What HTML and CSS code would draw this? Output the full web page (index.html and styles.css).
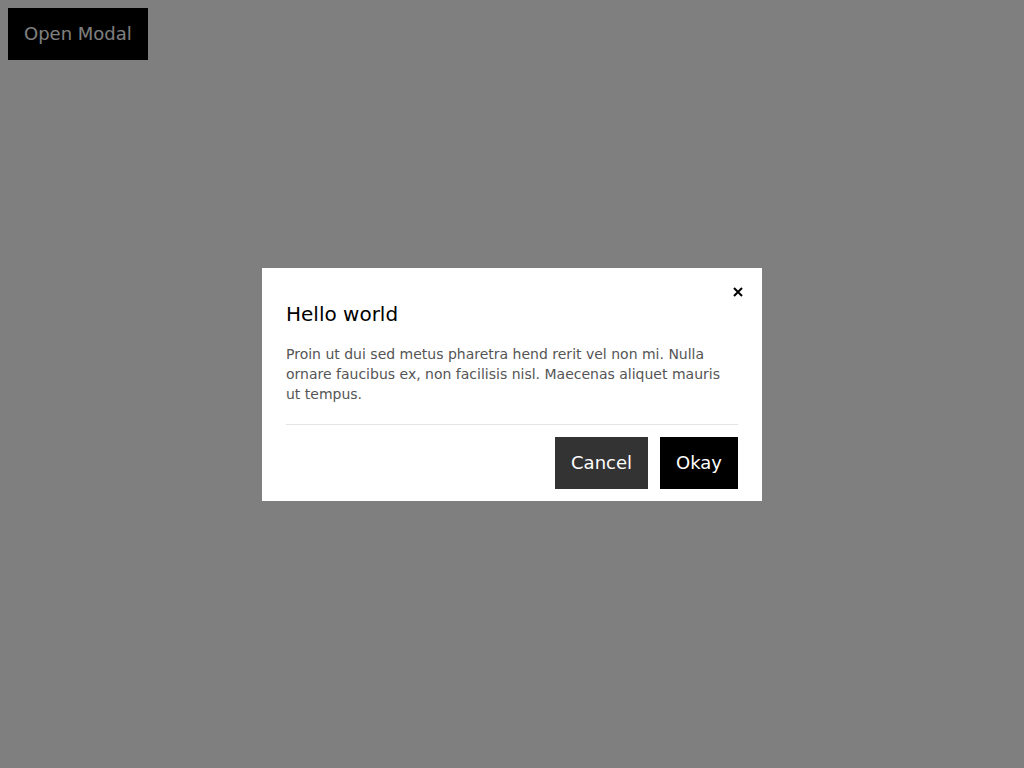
FILE: index.html
```html
<!DOCTYPE html>
<html lang="en">
<head>
<meta charset="utf-8">
<title>Modal</title>
<link rel="stylesheet" href="styles.css">
</head>
<body>
<button class="btn btn-open">Open Modal</button>
<div class="overlay">
  <div class="modal" role="dialog" aria-labelledby="modal-title">
    <button class="close" aria-label="Close">
      <svg width="10" height="10" viewBox="0 0 10 10"><path d="M1 1L9 9M9 1L1 9" stroke="#000" stroke-width="2" fill="none"/></svg>
    </button>
    <h2 class="modal-title" id="modal-title">Hello world</h2>
    <p class="modal-body">Proin ut dui sed metus pharetra hend rerit vel non mi. Nulla ornare faucibus ex, non facilisis nisl. Maecenas aliquet mauris ut tempus.</p>
    <div class="modal-footer">
      <button class="btn btn-cancel">Cancel</button>
      <button class="btn btn-okay">Okay</button>
    </div>
  </div>
</div>
</body>
</html>
```
FILE: styles.css
```css
html, body {
  margin: 0;
  padding: 0;
  height: 100%;
}
body {
  background: #fff;
  font-family: "DejaVu Sans", sans-serif;
  padding: 8px;
  box-sizing: border-box;
}
.btn {
  font-family: "DejaVu Sans", sans-serif;
  font-size: 18px;
  height: 52px;
  line-height: 52px;
  padding: 0 16px;
  border: 0;
  color: #fff;
  background: #000;
  cursor: pointer;
  display: inline-block;
}
.btn-cancel {
  background: #333;
}
.overlay {
  position: fixed;
  inset: 0;
  background: rgba(0, 0, 0, 0.5);
  display: flex;
  align-items: center;
  justify-content: center;
}
.modal {
  position: relative;
  width: 500px;
  box-sizing: border-box;
  background: #fff;
  padding: 34px 24px 12px;
}
.close {
  position: absolute;
  top: 12px;
  right: 12px;
  width: 24px;
  height: 24px;
  padding: 0;
  border: 0;
  background: transparent;
  display: flex;
  align-items: center;
  justify-content: center;
  cursor: pointer;
}
.close svg {
  display: block;
}
.modal-title {
  margin: 0 0 18px;
  font-size: 20px;
  line-height: 24px;
  font-weight: normal;
  color: #000;
}
.modal-body {
  margin: 0 0 20px;
  font-size: 14px;
  line-height: 20px;
  color: #555;
}
.modal-footer {
  border-top: 1px solid #e5e5e5;
  padding-top: 12px;
  display: flex;
  justify-content: flex-end;
  gap: 12px;
}
```
